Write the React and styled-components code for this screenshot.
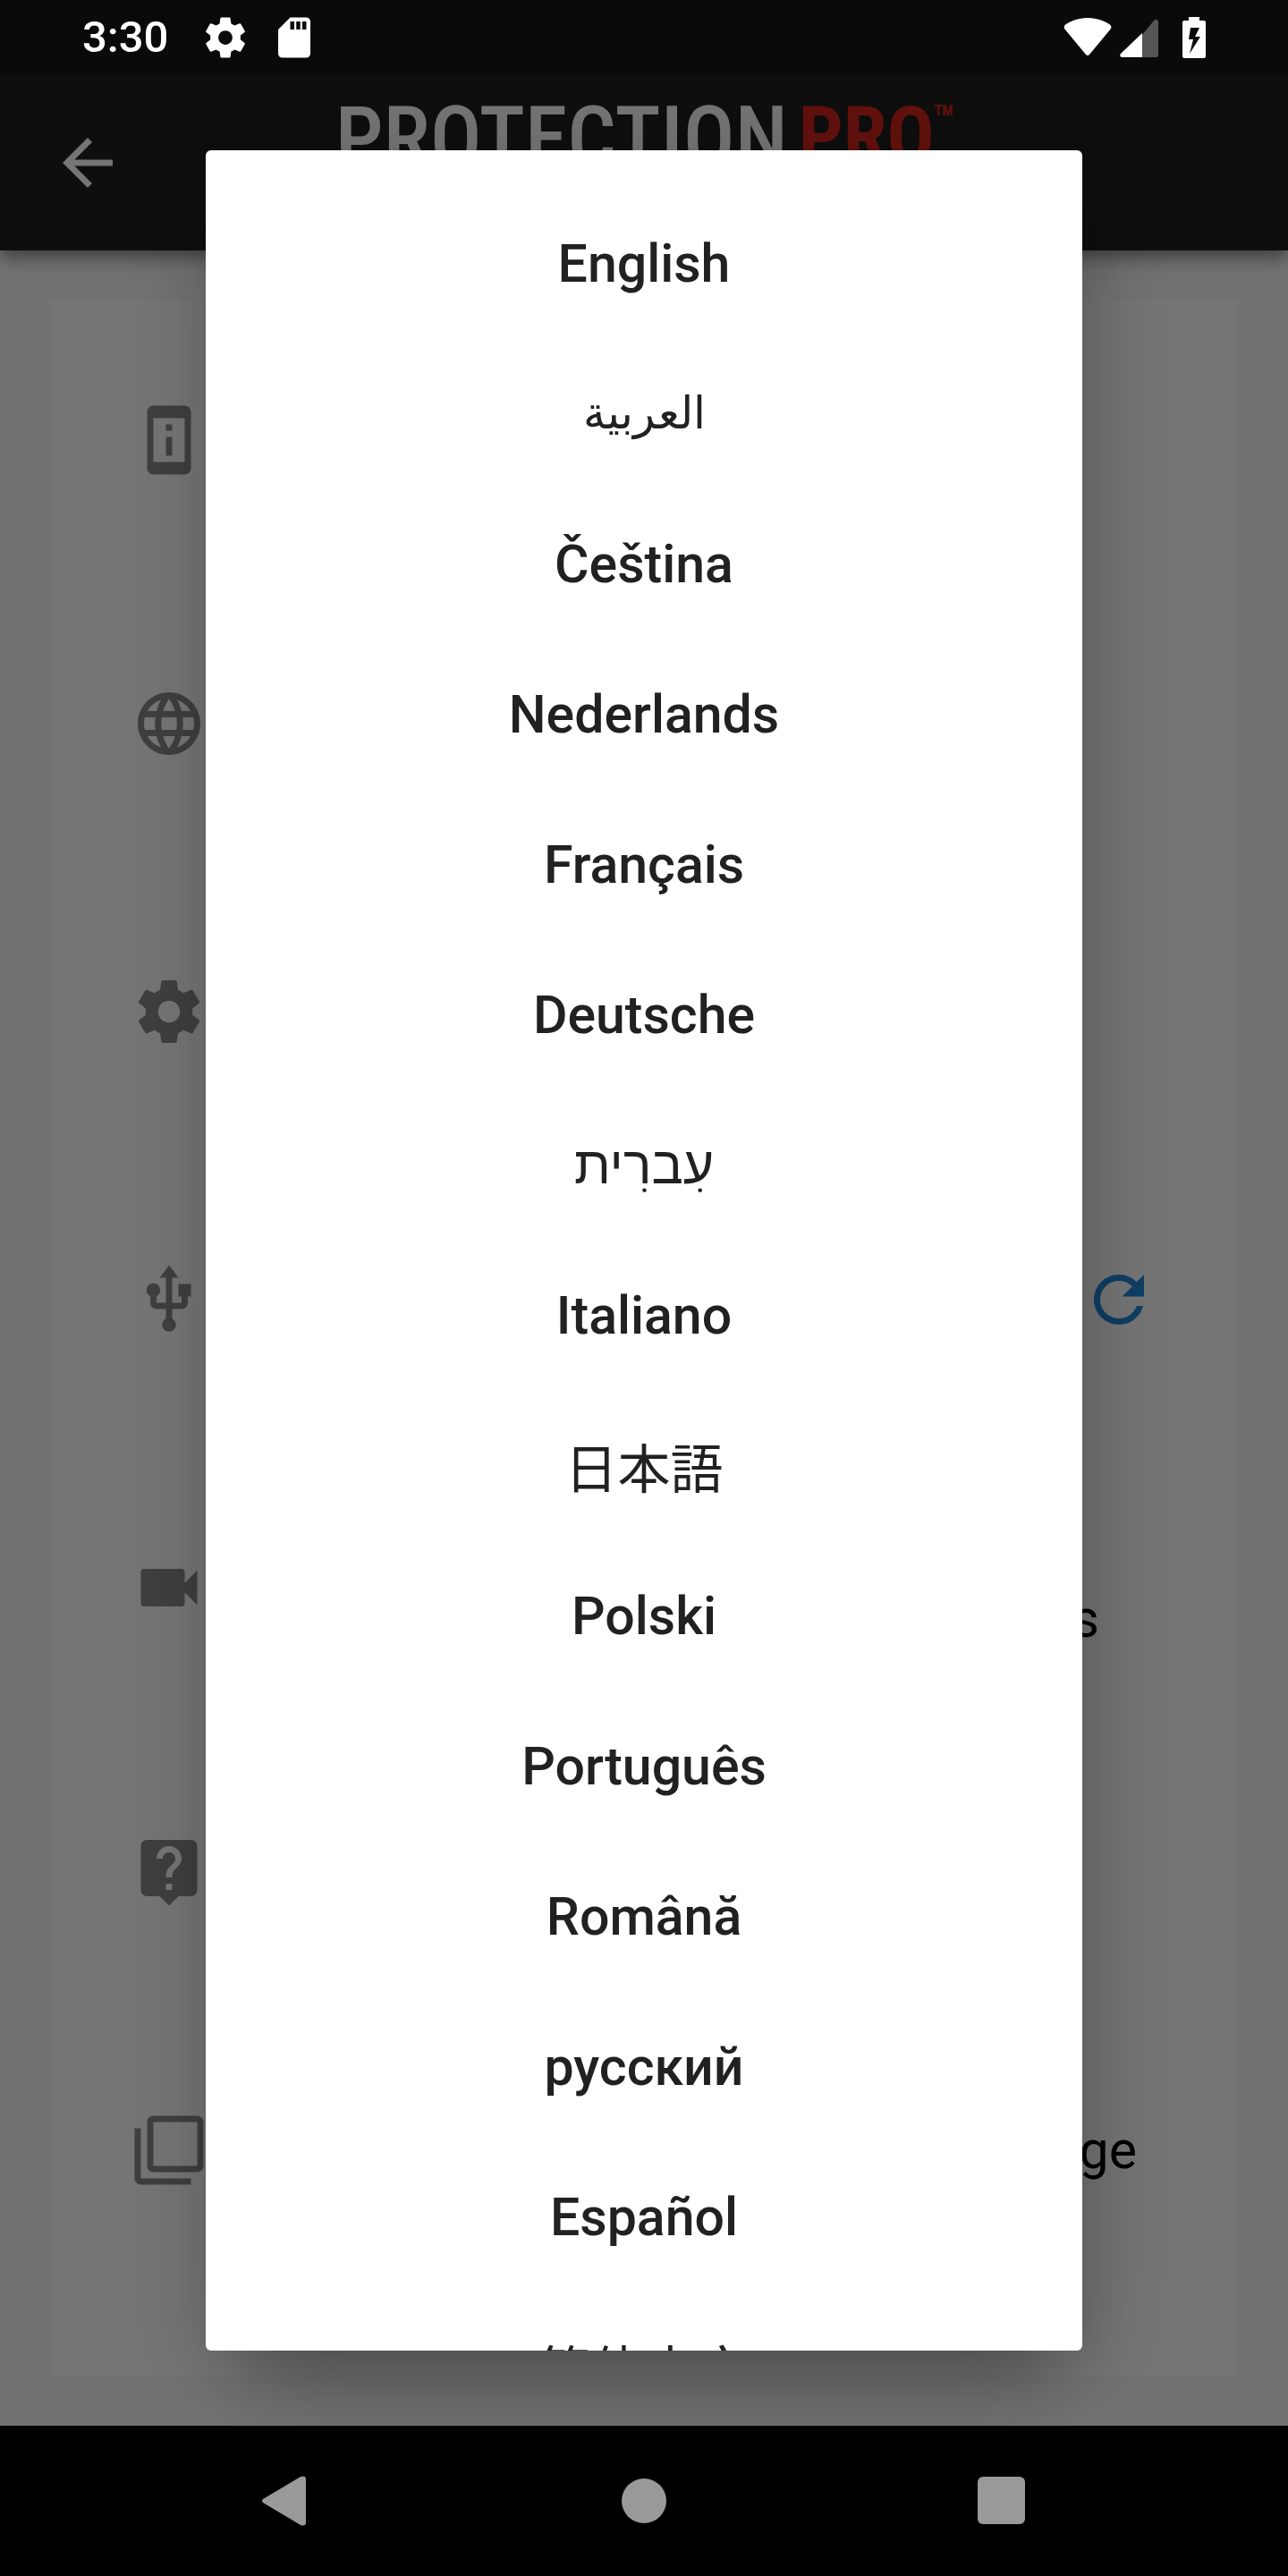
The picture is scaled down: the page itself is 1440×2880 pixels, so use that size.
import React from "react";
import styled, { createGlobalStyle } from "styled-components";

const GlobalStyle = createGlobalStyle`
  *, *::before, *::after { box-sizing: border-box; }
  body {
    margin: 0;
    background: #000;
    font-family: Roboto, "Noto Sans", "Noto Sans CJK JP", sans-serif;
  }
  button {
    border: 0;
    padding: 0;
    background: none;
    color: inherit;
    font: inherit;
    cursor: pointer;
  }
  ul { margin: 0; padding: 0; list-style: none; }
  svg { display: block; }
`;

const Screen = styled.div`
  display: flex;
  flex-direction: column;
  min-height: 100vh;
  background: #f9f9f9;
`;

const StatusBar = styled.header`
  position: relative;
  z-index: 3;
  display: flex;
  align-items: center;
  justify-content: space-between;
  height: 84px;
  padding: 0 92px;
  background: #0a0a0a;
  color: #fff;
`;

const StatusGroup = styled.div`
  display: flex;
  align-items: center;
  gap: ${(p) => p.$gap}px;
`;

const Clock = styled.time`
  margin-right: 14px;
  font-size: 49px;
  font-weight: 500;
  line-height: 60px;
`;

const AppBar = styled.div`
  position: relative;
  z-index: 1;
  display: grid;
  grid-template-columns: 84px 1fr 84px;
  align-items: center;
  height: 196px;
  padding: 0 56px;
  background: #1f1f1f;
  color: #fff;
  box-shadow: 0 7px 14px rgba(0, 0, 0, 0.3), 0 10px 28px rgba(0, 0, 0, 0.2);
`;

const Wordmark = styled.div`
  display: flex;
  align-items: flex-start;
  justify-content: center;
  align-self: start;
  gap: 12px;
  padding-top: 16px;
  font-family: "Liberation Sans Narrow", "Roboto Condensed", Roboto, sans-serif;
  font-size: 96px;
  font-weight: 500;
  line-height: 108px;
`;

const WordmarkAccent = styled.span`
  display: flex;
  color: #d7251c;
  font-size: 88px;
  font-weight: 700;
  line-height: 102px;
`;

const Trademark = styled.span`
  font-size: 16px;
  line-height: 48px;
`;

const Main = styled.main`
  flex: 1;
  display: flex;
  padding: 56px;
`;

const Card = styled.ul`
  flex: 1;
  display: flex;
  flex-direction: column;
  background: #fff;
`;

const SettingRow = styled.li`
  display: flex;
  align-items: center;
  justify-content: space-between;
  height: ${(p) => (p.$compact ? 312 : 322)}px;
  padding: 0 91px;
  color: #898989;
  border-bottom: 1px solid #fcfcfc;
  &:last-child { border-bottom: 0; }
`;

const SettingLabel = styled.span`
  padding-right: ${(p) => p.$end}px;
  color: #000;
  font-size: 59px;
  line-height: 70px;
  text-align: center;
  white-space: pre-line;
`;

const RefreshButton = styled.button`
  color: #1e88d8;
`;

const Scrim = styled.div`
  position: fixed;
  inset: 0;
  z-index: 2;
  display: flex;
  justify-content: center;
  padding: 168px 84px 252px;
  background: rgba(0, 0, 0, 0.54);
`;

const Dialog = styled.div`
  width: 980px;
  padding: 42px 0;
  overflow: hidden;
  border-radius: 6px;
  background: #fff;
  box-shadow: 8px 70px 90px -40px rgba(0, 0, 0, 0.24), 6px 20px 110px rgba(0, 0, 0, 0.22);
`;

const LanguageButton = styled.button`
  display: flex;
  align-items: center;
  justify-content: center;
  width: 100%;
  height: 168px;
  color: #212121;
  font-size: ${(p) => (p.lang === "ar" ? 50 : 59)}px;
  font-weight: ${(p) => (p.$plain ? 400 : 500)};
  line-height: normal;
`;

const NavBar = styled.nav`
  position: relative;
  z-index: 3;
  display: flex;
  align-items: center;
  justify-content: center;
  gap: 300px;
  height: 168px;
  background: #000;
  color: #999;
`;

const NavButton = styled.button`
  display: grid;
  place-items: center;
  width: 100px;
  height: 100px;
`;

const PATHS = {
  back: "M20 11H7.83l5.59-5.59L12 4l-8 8 8 8 1.41-1.41L7.83 13H20v-2z",
  device:
    "M13 7h-2v2h2V7zm0 4h-2v6h2v-6zm4-9.99L7 1c-1.1 0-2 .9-2 2v18c0 1.1.9 2 2 2h10c1.1 0 2-.9 2-2V3c0-1.1-.9-1.99-2-1.99zM17 19H7V5h10v14z",
  globe:
    "M11.99 2C6.47 2 2 6.48 2 12s4.47 10 9.99 10C17.52 22 22 17.52 22 12S17.52 2 11.99 2zm6.93 6h-2.95c-.32-1.25-.78-2.45-1.38-3.56 1.84.63 3.37 1.91 4.33 3.56zM12 4.04c.83 1.2 1.48 2.53 1.91 3.96h-3.82c.43-1.43 1.08-2.76 1.91-3.96zM4.26 14C4.1 13.36 4 12.69 4 12s.1-1.36.26-2h3.38c-.08.66-.14 1.32-.14 2s.06 1.34.14 2H4.26zm.82 2h2.95c.32 1.25.78 2.45 1.38 3.56-1.84-.63-3.37-1.9-4.33-3.56zm2.95-8H5.08c.96-1.66 2.49-2.93 4.33-3.56C8.81 5.55 8.35 6.75 8.03 8zM12 19.96c-.83-1.2-1.48-2.53-1.91-3.96h3.82c-.43 1.43-1.08 2.76-1.91 3.96zM14.34 14H9.66c-.09-.66-.16-1.32-.16-2s.07-1.35.16-2h4.68c.09.65.16 1.32.16 2s-.07 1.34-.16 2zm.25 5.56c.6-1.11 1.06-2.31 1.38-3.56h2.95c-.96 1.65-2.49 2.93-4.33 3.56zM16.36 14c.08-.66.14-1.32.14-2s-.06-1.34-.14-2h3.38c.16.64.26 1.31.26 2s-.1 1.36-.26 2h-3.38z",
  gear: "M19.43 12.98c.04-.32.07-.64.07-.98s-.03-.66-.07-.98l2.11-1.65c.19-.15.24-.42.12-.64l-2-3.46c-.12-.22-.39-.3-.61-.22l-2.49 1c-.52-.4-1.08-.73-1.69-.98l-.38-2.65C14.46 2.18 14.25 2 14 2h-4c-.25 0-.46.18-.49.42l-.38 2.65c-.61.25-1.17.59-1.69.98l-2.49-1c-.23-.09-.49 0-.61.22l-2 3.46c-.13.22-.07.49.12.64l2.11 1.65c-.04.32-.07.65-.07.98s.03.66.07.98l-2.11 1.65c-.19.15-.24.42-.12.64l2 3.46c.12.22.39.3.61.22l2.49-1c.52.4 1.08.73 1.69.98l.38 2.65c.03.24.24.42.49.42h4c.25 0 .46-.18.49-.42l.38-2.65c.61-.25 1.17-.59 1.69-.98l2.49 1c.23.09.49 0 .61-.22l2-3.46c.12-.22.07-.49-.12-.64l-2.11-1.65zM12 15.5c-1.93 0-3.5-1.57-3.5-3.5s1.57-3.5 3.5-3.5 3.5 1.57 3.5 3.5-1.57 3.5-3.5 3.5z",
  usb: "M15 7v4h1v2h-3V5h2l-3-4-3 4h2v8H8v-2.07c.7-.37 1.2-1.08 1.2-1.93 0-1.21-.99-2.2-2.2-2.2-1.21 0-2.2.99-2.2 2.2 0 .85.5 1.56 1.2 1.93V13c0 1.11.89 2 2 2h3v3.05c-.71.37-1.2 1.1-1.2 1.95 0 1.22.99 2.2 2.2 2.2 1.21 0 2.2-.98 2.2-2.2 0-.85-.49-1.58-1.2-1.95V15h3c1.11 0 2-.89 2-2v-2h1V7h-4z",
  video:
    "M17 10.5V7c0-.55-.45-1-1-1H4c-.55 0-1 .45-1 1v10c0 .55.45 1 1 1h12c.55 0 1-.45 1-1v-3.5l4 4v-11l-4 4z",
  help: "M19 2H5c-1.11 0-2 .9-2 2v14c0 1.1.89 2 2 2h4l3 3 3-3h4c1.1 0 2-.9 2-2V4c0-1.1-.9-2-2-2zm-6 16h-2v-2h2v2zm2.07-7.75l-.9.92C13.45 11.9 13 12.5 13 14h-2v-.5c0-1.1.45-2.1 1.17-2.83l1.24-1.26c.37-.36.59-.86.59-1.41 0-1.1-.9-2-2-2s-2 .9-2 2H8c0-2.21 1.79-4 4-4s4 1.79 4 4c0 .88-.36 1.68-.93 2.25z",
  copies:
    "M3 5H1v16c0 1.1.9 2 2 2h16v-2H3V5zm18-4H7c-1.1 0-2 .9-2 2v14c0 1.1.9 2 2 2h14c1.1 0 2-.9 2-2V3c0-1.1-.9-2-2-2zm0 16H7V3h14v14z",
  refresh:
    "M17.65 6.35C16.2 4.9 14.21 4 12 4c-4.42 0-7.99 3.58-7.99 8s3.57 8 7.99 8c3.73 0 6.84-2.55 7.73-6h-2.08c-.82 2.33-3.04 4-5.65 4-3.31 0-6-2.69-6-6s2.69-6 6-6c1.66 0 3.14.69 4.22 1.78L13 11h7V4l-2.35 2.35z",
  sdCard:
    "M18 2h-8L4.02 8 4 20c0 1.1.9 2 2 2h12c1.1 0 2-.9 2-2V4c0-1.1-.9-2-2-2zm-6 6h-2V4h2v4zm3 0h-2V4h2v4zm3 0h-2V4h2v4z",
};

function Icon({ name, size = 84 }) {
  return (
    <svg width={size} height={size} viewBox="0 0 24 24" fill="currentColor" aria-hidden="true">
      <path d={PATHS[name]} />
    </svg>
  );
}

const SETTINGS = [
  { icon: "device", compact: true },
  { icon: "globe" },
  { icon: "gear" },
  { icon: "usb", refresh: true },
  { icon: "video", label: "How\nto Videos", end: 64 },
  { icon: "help", compact: true },
  { icon: "copies", compact: true, label: "Storage", end: 22 },
];

const LANGUAGES = [
  { code: "en", name: "English" },
  { code: "ar", name: "العربية", plain: true },
  { code: "cs", name: "Čeština" },
  { code: "nl", name: "Nederlands" },
  { code: "fr", name: "Français" },
  { code: "de", name: "Deutsche" },
  { code: "he", name: "עִברִית", plain: true },
  { code: "it", name: "Italiano" },
  { code: "ja", name: "日本語", plain: true },
  { code: "pl", name: "Polski" },
  { code: "pt", name: "Português" },
  { code: "ro", name: "Română" },
  { code: "ru", name: "русский" },
  { code: "es", name: "Español" },
  { code: "zh-Hans", name: "简体中文", plain: true },
];

export default function App() {
  return (
    <>
      <GlobalStyle />
      <Screen>
        <StatusBar>
          <StatusGroup $gap={23}>
            <Clock>3:30</Clock>
            <Icon name="gear" size={54} />
            <Icon name="sdCard" size={54} />
          </StatusGroup>
          <StatusGroup $gap={9}>
            <svg width="54" height="46" viewBox="0 0 54 46" fill="#fff" aria-label="Wi-Fi">
              <path d="M27 1C16 1 7 5 1.5 9Q0 11 1 13L25 42Q27 44 29 42L53 13Q54 11 52.5 9C47 5 38 1 27 1z" />
            </svg>
            <svg width="43" height="46" viewBox="0 0 43 46" aria-label="Mobile signal">
              <path d="M25 20L38 4Q42 1 43 5V43Q43 45 41 45H25z" fill="#555" />
              <path d="M25 18V45H2Q-1 44 1 41z" fill="#fff" />
            </svg>
            <svg width="44" height="46" viewBox="-8 0 44 46" aria-label="Battery charging">
              <path
                fill="#fff"
                fillRule="evenodd"
                d="M17 0H29V4H34Q36 4 36 6V44Q36 46 34 46H12Q10 46 10 44V6Q10 4 12 4H17zM19 12L17 25H22L18 41L30 22H24L29 12z"
              />
            </svg>
          </StatusGroup>
        </StatusBar>

        <AppBar>
          <button type="button" aria-label="Back">
            <Icon name="back" />
          </button>
          <Wordmark>
            <span>PROTECTION</span>
            <WordmarkAccent>
              PRO<Trademark>TM</Trademark>
            </WordmarkAccent>
          </Wordmark>
        </AppBar>

        <Main>
          <Card>
            {SETTINGS.map((row) => (
              <SettingRow key={row.icon} $compact={row.compact}>
                <Icon name={row.icon} />
                {row.label && <SettingLabel $end={row.end}>{row.label}</SettingLabel>}
                {row.refresh && (
                  <RefreshButton type="button" aria-label="Refresh">
                    <Icon name="refresh" />
                  </RefreshButton>
                )}
              </SettingRow>
            ))}
          </Card>
        </Main>

        <NavBar>
          <NavButton type="button" aria-label="Back">
            <svg width="56" height="56" viewBox="0 0 56 56" fill="currentColor">
              <path d="M2 26L44 1Q50 -1 50 4V52Q50 57 44 55L2 30Q0 28 2 26z" />
            </svg>
          </NavButton>
          <NavButton type="button" aria-label="Home">
            <svg width="50" height="50" viewBox="0 0 50 50" fill="currentColor">
              <circle cx="25" cy="25" r="25" />
            </svg>
          </NavButton>
          <NavButton type="button" aria-label="Recent apps">
            <svg width="54" height="54" viewBox="0 0 54 54" fill="currentColor">
              <rect width="53" height="53" rx="6" />
            </svg>
          </NavButton>
        </NavBar>
      </Screen>

      <Scrim>
        <Dialog role="dialog" aria-modal="true" aria-label="Language">
          <ul>
            {LANGUAGES.map((lang) => (
              <li key={lang.code}>
                <LanguageButton type="button" lang={lang.code} $plain={lang.plain}>
                  {lang.name}
                </LanguageButton>
              </li>
            ))}
          </ul>
        </Dialog>
      </Scrim>
    </>
  );
}
